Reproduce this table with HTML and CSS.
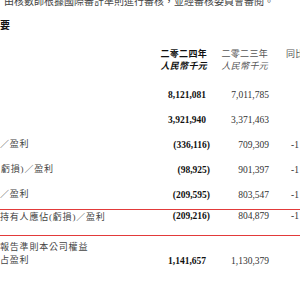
FILE: index.html
```html
<!DOCTYPE html>
<html lang="zh-Hant">
<head>
<meta charset="utf-8">
<link rel="stylesheet" href="styles.css">
</head>
<body>
<div class="page">
  <p class="intro">由核數師根據國際審計準則進行審核，並經審核委員會審閱。</p>
  <h2 class="heading">要</h2>
  <div class="tbl">
    <div class="row hdr">
      <span class="lab"></span>
      <span class="c1 b">二零二四年</span>
      <span class="c2">二零二三年</span>
      <span class="c3 h3">同比</span>
    </div>
    <div class="row hdr">
      <span class="lab"></span>
      <span class="c1 b i">人民幣千元</span>
      <span class="c2 i">人民幣千元</span>
      <span class="c3"></span>
    </div>
    <div class="row r1">
      <span class="lab"></span>
      <span class="c1 num b pad">8,121,081</span>
      <span class="c2 num">7,011,785</span>
      <span class="c3 num"></span>
    </div>
    <div class="row">
      <span class="lab"></span>
      <span class="c1 num b pad">3,921,940</span>
      <span class="c2 num">3,371,463</span>
      <span class="c3 num"></span>
    </div>
    <div class="row">
      <span class="lab">／盈利</span>
      <span class="c1 num b">(336,116)</span>
      <span class="c2 num">709,309</span>
      <span class="c3 num">-1</span>
    </div>
    <div class="row">
      <span class="lab cut">虧損)／盈利</span>
      <span class="c1 num b">(98,925)</span>
      <span class="c2 num">901,397</span>
      <span class="c3 num">-1</span>
    </div>
    <div class="row">
      <span class="lab">／盈利</span>
      <span class="c1 num b">(209,595)</span>
      <span class="c2 num">803,547</span>
      <span class="c3 num">-1</span>
    </div>
    <div class="row hl">
      <span class="lab">持有人應佔(虧損)／盈利</span>
      <span class="c1 num b">(209,216)</span>
      <span class="c2 num">804,879</span>
      <span class="c3 num">-1</span>
    </div>
    <div class="row last">
      <span class="lab">報告準則本公司權益<br>占盈利</span>
      <span class="c1 num b pad">1,141,657</span>
      <span class="c2 num">1,130,379</span>
      <span class="c3 num"></span>
    </div>
  </div>
</div>
</body>
</html>
```

FILE: styles.css
```css
html, body {
  margin: 0;
  padding: 0;
  background: #ffffff;
}
body {
  width: 300px;
  height: 300px;
  overflow: hidden;
  font-family: "Liberation Serif", "Noto Sans CJK TC", serif;
  color: #333;
}
.page {
  width: 300px;
}
.intro {
  margin: -4px 0 0 4px;
  white-space: nowrap;
  font-size: 10px;
  line-height: 12px;
  color: #444;
}
.heading {
  margin: 12px 0 0 0;
  font-size: 10px;
  line-height: 12px;
  font-weight: bold;
  color: #111;
}
.tbl {
  margin-top: 15px;
  display: flex;
  flex-direction: column;
  width: 300px;
}
.row {
  display: grid;
  grid-template-columns: 150px 60px 59px 31px;
  align-items: center;
  height: 25px;
  font-size: 9.5px;
  white-space: nowrap;
}
.row.hdr {
  height: 12px;
  font-size: 9px;
  letter-spacing: 0.3px;
}
.row.r1 {
  margin-top: 11px;
}
.lab {
  font-size: 9px;
  letter-spacing: 0.8px;
  color: #444;
  line-height: 12.5px;
}
.lab.cut {
  padding-left: 1px;
}
.c1, .c2 {
  text-align: right;
}
.c3 {
  text-align: left;
  padding-left: 22px;
  color: #444;
}
.hdr .c1 { padding-right: 3px; color: #111; }
.hdr .c2 { color: #555; padding-right: 1px; }
.h3 {
  padding-left: 17px;
  color: #555;
}
.num {
  font-family: "Liberation Serif", serif;
  color: #333;
}
.b {
  font-weight: bold;
  color: #111;
}
.i {
  font-style: italic;
}
.pad {
  padding-right: 4px;
}
.hl {
  height: 27px;
  margin-top: 2px;
  border-top: 1px solid #e23a3a;
  border-bottom: 1px solid #e23a3a;
  align-items: start;
  padding-top: 1px;
  box-sizing: border-box;
}
.last {
  height: 30px;
  align-items: end;
}
```
